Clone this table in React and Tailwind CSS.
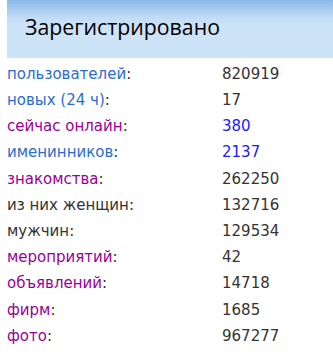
import React from "react";

const rows = [
  { label: "пользователей", lc: "text-[#2a6ccf]", value: "820919", vc: "text-[#333]" },
  { label: "новых (24 ч)", lc: "text-[#2a6ccf]", value: "17", vc: "text-[#333]" },
  { label: "сейчас онлайн", lc: "text-[#990099]", value: "380", vc: "text-[#1a1aff]" },
  { label: "именинников", lc: "text-[#2a6ccf]", value: "2137", vc: "text-[#1a1aff]" },
  { label: "знакомства", lc: "text-[#990099]", value: "262250", vc: "text-[#333]" },
  { label: "из них женщин", lc: "text-[#333]", value: "132716", vc: "text-[#333]" },
  { label: "мужчин", lc: "text-[#333]", value: "129534", vc: "text-[#333]" },
  { label: "мероприятий", lc: "text-[#990099]", value: "42", vc: "text-[#333]" },
  { label: "объявлений", lc: "text-[#990099]", value: "14718", vc: "text-[#333]" },
  { label: "фирм", lc: "text-[#990099]", value: "1685", vc: "text-[#333]" },
  { label: "фото", lc: "text-[#990099]", value: "967277", vc: "text-[#333]" },
];

export default function App() {
  return (
    <div className="w-[333px] h-[364px] bg-white overflow-hidden">
      <div className="ml-[7px] h-[58px] bg-[linear-gradient(to_bottom,#8ab9ea_0px,#c3dcf6_18px,#cde3f8_26px,#cde3f8_100%)] flex items-center pl-[18px] pb-[4px]">
        <span className="text-[21.3px] text-black font-['Open_Sans',sans-serif]">Зарегистрировано</span>
      </div>
      <div className="pt-[3px] font-['DejaVu_Sans',Verdana,sans-serif] text-[15px]">
        {rows.map((r) => (
          <div key={r.label} className="flex h-[26.2px] items-center">
            <div className="w-[222px] pl-[7px] text-[#333]">
              <span className={r.lc}>{r.label}</span>:
            </div>
            <div className={r.vc}>{r.value}</div>
          </div>
        ))}
      </div>
    </div>
  );
}
